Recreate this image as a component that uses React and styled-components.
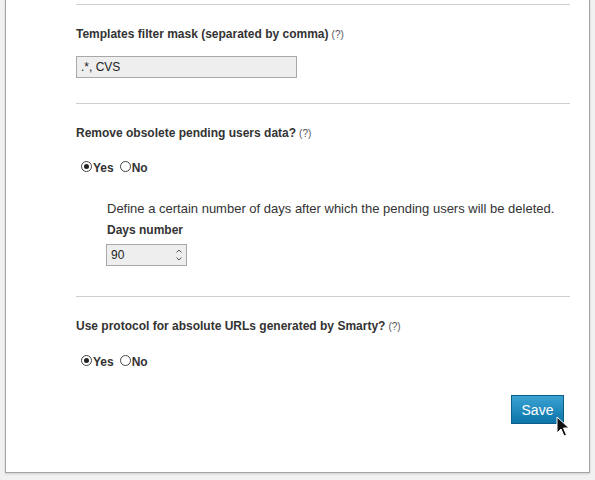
import styled, { createGlobalStyle } from 'styled-components';

const GlobalStyle = createGlobalStyle`
    html, body {
        margin: 0;
        padding: 0;
        background: #f1f1f1;
        font-family: "Liberation Sans", Arial, sans-serif;
        color: #333;
    }
`;

const Page = styled.div`
    padding: 0 5px 0 5px;
    width: 595px;
    height: 480px;
    box-sizing: border-box;
    overflow: hidden;
`;

const Panel = styled.div`
    position: relative;
    background: #fff;
    border: 1px solid #a3a3a3;
    border-top: none;
    box-shadow: 0 1px 2px rgba(0, 0, 0, 0.15);
    padding: 4px 19px 0 70px;
    height: 473px;
    box-sizing: border-box;
`;

const Section = styled.div`
    border-top: 1px solid #cfcfcf;
    padding: ${props => props.$top || 22}px 0 ${props => props.$bottom || 0}px 0;
`;

const Title = styled.div`
    font-size: 12px;
    line-height: 15px;
    font-weight: bold;
    color: #333;
    margin-bottom: ${props => props.$gap}px;
`;

const Hint = styled.span`
    font-size: 10px;
    font-weight: normal;
    color: #555;
    margin-left: 3px;
`;

const TextInput = styled.div`
    width: 221px;
    height: 22px;
    box-sizing: border-box;
    border: 1px solid #a8a8a8;
    background: #eeeeee;
    font-size: 12px;
    line-height: 20px;
    padding-left: 4px;
    color: #222;
`;

const RadioRow = styled.div`
    display: flex;
    align-items: center;
    height: 16px;
    padding-left: 5px;
`;

const RadioOption = styled.label`
    display: flex;
    align-items: center;
    font-size: 12px;
    font-weight: bold;
    color: #333;
    margin-right: 6px;

    span {
        margin-top: 3px;
    }
`;

const RadioCircle = styled.i`
    display: inline-flex;
    align-items: center;
    justify-content: center;
    width: 11px;
    height: 11px;
    box-sizing: border-box;
    border: 1px solid #444;
    border-radius: 50%;
    margin-right: 1px;
    background: #fff;

    &::after {
        content: '';
        width: 5px;
        height: 5px;
        border-radius: 50%;
        background: ${props => props.$checked ? '#222' : 'transparent'};
    }
`;

const SubBlock = styled.div`
    padding-left: 31px;
    margin-top: 27px;
`;

const Description = styled.div`
    font-size: 13px;
    line-height: 15px;
    color: #333;
    margin-bottom: 7px;
`;

const NumberInput = styled.div`
    display: flex;
    align-items: center;
    justify-content: space-between;
    width: 81px;
    height: 22px;
    box-sizing: border-box;
    border: 1px solid #a8a8a8;
    background: #eeeeee;
    font-size: 12px;
    padding: 0 3px 0 4px;
    color: #222;
    margin-left: -1px;
`;

const Footer = styled.div`
    display: flex;
    justify-content: flex-end;
    padding-right: 6px;
    margin-top: 27px;
`;

const SaveButton = styled.button`
    width: 53px;
    height: 29px;
    border: 1px solid #0b5e88;
    background: linear-gradient(#3ba2d3, #0b74a8);
    color: #fff;
    font-family: "Liberation Sans", Arial, sans-serif;
    font-size: 14px;
    padding: 0;
`;

const Cursor = styled.svg`
    position: absolute;
    left: 550px;
    top: 416px;
`;

function Radios({ value }) {
    return (
        <RadioRow>
            <RadioOption><RadioCircle $checked={value} /><span>Yes</span></RadioOption>
            <RadioOption><RadioCircle $checked={!value} /><span>No</span></RadioOption>
        </RadioRow>
    );
}

export default function App() {
    return (
        <Page>
            <GlobalStyle />
            <Panel>
                <Section $bottom={25}>
                    <Title $gap={14}>Templates filter mask (separated by comma)<Hint>(?)</Hint></Title>
                    <TextInput>.*, CVS</TextInput>
                </Section>
                <Section $bottom={30}>
                    <Title $gap={17}>Remove obsolete pending users data?<Hint>(?)</Hint></Title>
                    <Radios value={true} />
                    <SubBlock>
                        <Description>Define a certain number of days after which the pending users will be deleted.</Description>
                        <Title $gap={6}>Days number</Title>
                        <NumberInput>
                            <span>90</span>
                            <svg width="8" height="14" viewBox="0 0 8 14">
                                <path d="M1.5 4.5 L4 2 L6.5 4.5" fill="none" stroke="#555" strokeWidth="1" />
                                <path d="M1.5 9.5 L4 12 L6.5 9.5" fill="none" stroke="#555" strokeWidth="1" />
                            </svg>
                        </NumberInput>
                    </SubBlock>
                </Section>
                <Section>
                    <Title $gap={18}>Use protocol for absolute URLs generated by Smarty?<Hint>(?)</Hint></Title>
                    <Radios value={true} />
                    <Footer>
                        <SaveButton>Save</SaveButton>
                    </Footer>
                </Section>
                <Cursor width="14" height="22" viewBox="0 0 14 22">
                    <path d="M1 1 L1 17 L5 13 L8 20 L10.5 19 L7.5 12 L13 12 Z" fill="#111" stroke="#fff" strokeWidth="1" strokeLinejoin="round" />
                </Cursor>
            </Panel>
        </Page>
    );
}
